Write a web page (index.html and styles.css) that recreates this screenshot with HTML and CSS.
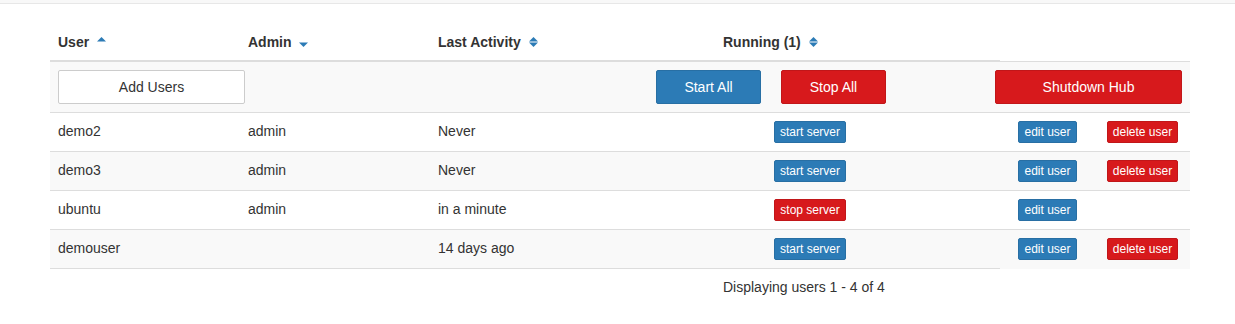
FILE: index.html
```html
<!DOCTYPE html>
<html lang="en">
<head>
  <meta charset="UTF-8">
  <meta name="viewport" content="width=device-width, initial-scale=1.0">
  <title>JupyterHub Admin</title>
  <link rel="stylesheet" href="styles.css">
</head>
<body>
  <!-- Navbar edge -->
  <div class="navbar"></div>

  <!-- Main Content -->
  <div class="container">
    <table class="user-table">
      <colgroup>
        <col class="col-2">
        <col class="col-2">
        <col class="col-3">
        <col class="col-2">
        <col class="col-1">
        <col class="col-1">
        <col class="col-1">
      </colgroup>
      <thead>
        <tr>
          <th>User <a href="#" class="sort"><svg width="9" height="12" viewBox="0 0 9 12"><path d="M0 5.5 L4.5 1 L9 5.5 Z"/></svg></a></th>
          <th>Admin <a href="#" class="sort"><svg width="9" height="12" viewBox="0 0 9 12"><path d="M0 6.5 L4.5 11 L9 6.5 Z"/></svg></a></th>
          <th>Last Activity <a href="#" class="sort"><svg width="9" height="12" viewBox="0 0 9 12"><path d="M0 5.5 L4.5 1 L9 5.5 Z"/><path d="M0 6.5 L4.5 11 L9 6.5 Z"/></svg></a></th>
          <th colspan="2">Running (1) <a href="#" class="sort"><svg width="9" height="12" viewBox="0 0 9 12"><path d="M0 5.5 L4.5 1 L9 5.5 Z"/><path d="M0 6.5 L4.5 11 L9 6.5 Z"/></svg></a></th>
        </tr>
      </thead>
      <tbody>
        <tr class="add-user-row">
          <td colspan="7">
            <div class="toolbar">
              <a href="#" class="btn btn-default add-users">Add Users</a>
              <a href="#" class="btn btn-primary start-all">Start All</a>
              <a href="#" class="btn btn-danger stop-all">Stop All</a>
              <a href="#" class="btn btn-danger shutdown">Shutdown Hub</a>
            </div>
          </td>
        </tr>
        <tr>
          <td>demo2</td>
          <td>admin</td>
          <td>Never</td>
          <td class="center"><a href="#" class="btn btn-xs btn-primary">start server</a></td>
          <td></td>
          <td class="center"><a href="#" class="btn btn-xs btn-primary">edit user</a></td>
          <td class="center"><a href="#" class="btn btn-xs btn-danger">delete user</a></td>
        </tr>
        <tr>
          <td>demo3</td>
          <td>admin</td>
          <td>Never</td>
          <td class="center"><a href="#" class="btn btn-xs btn-primary">start server</a></td>
          <td></td>
          <td class="center"><a href="#" class="btn btn-xs btn-primary">edit user</a></td>
          <td class="center"><a href="#" class="btn btn-xs btn-danger">delete user</a></td>
        </tr>
        <tr>
          <td>ubuntu</td>
          <td>admin</td>
          <td>in a minute</td>
          <td class="center"><a href="#" class="btn btn-xs btn-danger">stop server</a></td>
          <td></td>
          <td class="center"><a href="#" class="btn btn-xs btn-primary">edit user</a></td>
          <td></td>
        </tr>
        <tr>
          <td>demouser</td>
          <td></td>
          <td>14 days ago</td>
          <td class="center"><a href="#" class="btn btn-xs btn-primary">start server</a></td>
          <td></td>
          <td class="center"><a href="#" class="btn btn-xs btn-primary">edit user</a></td>
          <td class="center"><a href="#" class="btn btn-xs btn-danger">delete user</a></td>
        </tr>
      </tbody>
      <tfoot>
        <tr>
          <td colspan="3"></td>
          <td colspan="2">Displaying users 1 - 4 of 4</td>
        </tr>
      </tfoot>
    </table>
  </div>
</body>
</html>
```

FILE: styles.css
```css
/* Global Styles */
body {
  font-family: 'Liberation Sans', Arial, sans-serif;
  font-size: 14px;
  line-height: 20px;
  color: #333;
  background-color: #fff;
  margin: 0;
  padding: 0;
}

a {
  color: #2c7bb6;
  text-decoration: none;
}

/* Navbar bottom edge */
.navbar {
  height: 3px;
  background-color: #f8f8f8;
  border-bottom: 1px solid #e7e7e7;
}

/* Main Content Container */
.container {
  width: 1140px;
  margin: 20px 0 0 50px;
}

/* Table Styling */
.user-table {
  width: 100%;
  table-layout: fixed;
  border-collapse: collapse;
  border-spacing: 0;
}

.col-1 { width: 95px; }
.col-2 { width: 190px; }
.col-3 { width: 285px; }

.user-table th,
.user-table td {
  padding: 8px;
  line-height: 20px;
  text-align: left;
}

.user-table th {
  font-weight: bold;
  vertical-align: bottom;
  border-bottom: 2px solid #ddd;
}

.user-table td {
  vertical-align: top;
  border-top: 1px solid #ddd;
}

.user-table tbody tr:nth-child(odd) {
  background-color: #f9f9f9;
}

.user-table td.center {
  text-align: center;
}

/* Sort icons */
.sort svg {
  fill: #2c7bb6;
  vertical-align: -1px;
  margin-left: 4px;
}

/* Buttons */
.btn {
  display: inline-block;
  box-sizing: border-box;
  padding: 6px 12px;
  font-size: 14px;
  line-height: 20px;
  text-align: center;
  white-space: nowrap;
  border: 1px solid transparent;
  border-radius: 2px;
  color: #fff;
}

.btn-default {
  color: #333;
  background-color: #fff;
  border-color: #ccc;
}

.btn-primary {
  background-color: #2c7bb6;
  border-color: #286fa4;
}

.btn-danger {
  background-color: #d7191c;
  border-color: #c11619;
}

.btn-xs {
  padding: 1px 5px;
  font-size: 12px;
  line-height: 18px;
}

/* Add users row */
.toolbar {
  display: flex;
}

.add-users {
  width: 187px;
}

.start-all {
  width: 105px;
  margin-left: 411px;
}

.stop-all {
  width: 105px;
  margin-left: 20px;
}

.shutdown {
  width: 187px;
  margin-left: 109px;
}
```
